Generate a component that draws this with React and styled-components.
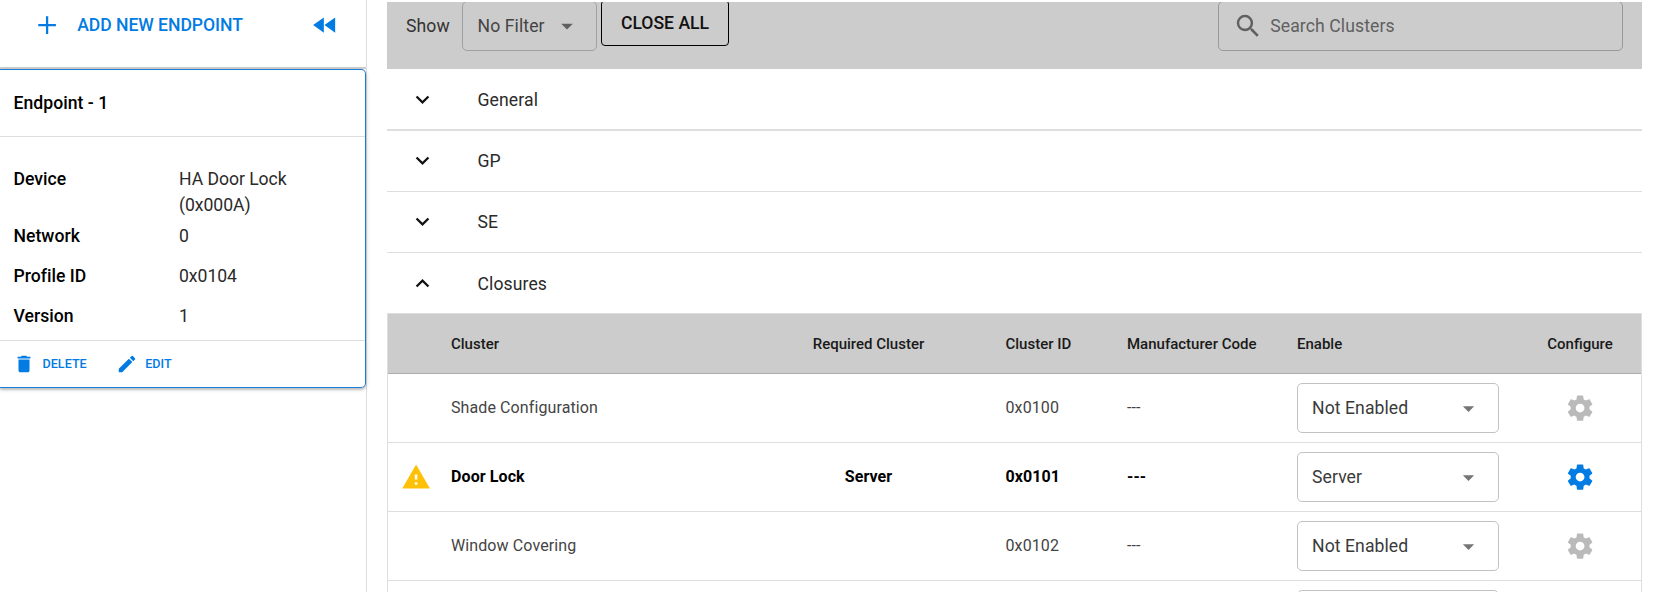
import React from "react";
import styled, { createGlobalStyle } from "styled-components";

const GlobalStyle = createGlobalStyle`
  *, *::before, *::after { box-sizing: border-box; }
  body {
    margin: 0;
    background: #fff;
    overflow: hidden;
    font-family: Roboto, "Liberation Sans", sans-serif;
    font-size: 17.6px;
    line-height: 26.4px;
    letter-spacing: 0.1px;
    color: #2a2a2a;
  }
`;

const icons = {
  add: "M19 12.9h-6.1V19h-1.8v-6.1H5v-1.8h6.1V5h1.8v6.1H19z",
  rewind: "M11 18V6l-8.5 6 8.5 6zm.5-6l8.5 6V6l-8.5 6z",
  trash: "M6 19c0 1.1.9 2 2 2h8c1.1 0 2-.9 2-2V7H6v12zM19 4h-3.5l-1-1h-5l-1 1H5v2h14V4z",
  pencil:
    "M3 17.25V21h3.75L17.81 9.94l-3.75-3.75L3 17.25zM20.71 7.04a1 1 0 0 0 0-1.41l-2.34-2.34a1 1 0 0 0-1.41 0l-1.83 1.83 3.75 3.75 1.83-1.83z",
  caret: "M7 10l5 5 5-5z",
  down: "M7.41 8.59L12 13.17l4.59-4.58L18 10l-6 6-6-6z",
  up: "M7.41 15.41L12 10.83l4.59 4.58L18 14l-6-6-6 6z",
  search:
    "M15.5 14h-.79l-.28-.27A6.471 6.471 0 0 0 16 9.5 6.5 6.5 0 1 0 9.5 16c1.61 0 3.09-.59 4.23-1.57l.27.28v.79l5 4.99L20.49 19l-4.99-5zm-6 0C7.01 14 5 11.99 5 9.5S7.01 5 9.5 5 14 7.01 14 9.5 11.99 14 9.5 14z",
  warning: "M1 21h22L12 2 1 21zm12-3h-2v-2h2v2zm0-4h-2v-4h2v4z",
  gear:
    "M19.43 12.98c.04-.32.07-.64.07-.98s-.03-.66-.07-.98l2.11-1.65c.19-.15.24-.42.12-.64l-2-3.46c-.12-.22-.39-.3-.61-.22l-2.49 1c-.52-.4-1.08-.73-1.69-.98l-.38-2.65C14.46 2.18 14.25 2 14 2h-4c-.25 0-.46.18-.49.42l-.38 2.65c-.61.25-1.17.59-1.69.98l-2.49-1c-.23-.09-.49 0-.61.22l-2 3.46c-.13.22-.07.49.12.64l2.11 1.65c-.04.32-.07.65-.07.98s.03.66.07.98l-2.11 1.65c-.19.15-.24.42-.12.64l2 3.46c.12.22.39.3.61.22l2.49-1c.52.4 1.08.73 1.69.98l.38 2.65c.03.24.24.42.49.42h4c.25 0 .46-.18.49-.42l.38-2.65c.61-.25 1.17-.59 1.69-.98l2.49 1c.23.09.49 0 .61-.22l2-3.46c.12-.22.07-.49-.12-.64l-2.11-1.65zM12 15.5c-1.93 0-3.5-1.57-3.5-3.5s1.57-3.5 3.5-3.5 3.5 1.57 3.5 3.5-1.57 3.5-3.5 3.5z",
};

const Svg = styled.svg`
  display: block;
  flex: none;
  width: ${(p) => p.$size}px;
  height: ${(p) => p.$size}px;
  fill: ${(p) => p.$color || "currentColor"};
`;

const Icon = ({ name, size, color }) => (
  <Svg viewBox="0 0 24 24" $size={size} $color={color} aria-hidden="true">
    <path d={icons[name]} />
  </Svg>
);

const Page = styled.div`
  display: flex;
  width: 1653px;
  height: 592px;
  overflow: hidden;
`;

const Sidebar = styled.aside`
  width: 367px;
  flex: none;
  border-right: 1px solid #dedede;
`;

const SidebarActions = styled.div`
  display: flex;
  align-items: center;
  justify-content: space-between;
  height: 67px;
  padding: 0 26px 17px 32px;
  color: #027be3;
`;

const PlainButton = styled.button`
  display: flex;
  align-items: center;
  padding: 0;
  border: 0;
  background: none;
  font: inherit;
  font-weight: 500;
  letter-spacing: -0.05px;
  color: inherit;
  gap: 15px;
`;

const CardFrame = styled.div`
  border-top: 2px solid #d3d3d3;
`;

const EndpointCard = styled.section`
  height: 319px;
  border: 1px solid #1a7dd7;
  border-left: 0;
  border-radius: 0 5px 5px 0;
  box-shadow: 0 1px 5px rgba(0, 0, 0, 0.2), 0 2px 2px rgba(0, 0, 0, 0.14);
`;

const CardTitle = styled.h2`
  display: flex;
  align-items: center;
  height: 67px;
  margin: 0;
  padding: 0 13.5px;
  border-bottom: 1px solid #dedede;
  font-size: 17.6px;
  font-weight: 500;
  letter-spacing: 0.03px;
  color: #000;
`;

const Details = styled.dl`
  display: grid;
  grid-template-columns: 165.5px 150px;
  grid-template-rows: 57px 40px 40px 40px;
  height: 204px;
  margin: 0;
  padding: 29px 0 0 13.5px;
  border-bottom: 1px solid #dedede;
`;

const Term = styled.dt`
  font-weight: 500;
  letter-spacing: 0.02px;
  color: #000;
`;

const Value = styled.dd`
  margin: 0;
  letter-spacing: -0.04px;
`;

const CardActions = styled.div`
  display: flex;
  align-items: center;
  height: 46px;
  padding-left: 13px;
  gap: 29px;
  color: #027be3;
`;

const SmallButton = styled(PlainButton)`
  font-size: 12.6px;
  letter-spacing: 0;
  gap: 7.5px;
`;

const Main = styled.main`
  width: 1255px;
  margin-left: 20px;
  padding-top: 2px;
`;

const Toolbar = styled.div`
  display: flex;
  align-items: flex-start;
  height: 67px;
  overflow: hidden;
  padding: 0 19px 0 19px;
  background: #ccc;
`;

const ToolbarLabel = styled.span`
  width: 56px;
  margin-top: 11px;
  color: #333;
`;

const Outlined = styled.div`
  display: flex;
  align-items: center;
  flex: none;
  width: ${(p) => p.$width}px;
  height: 50px;
  border: 1px solid ${(p) => p.$border || "#c2c2c2"};
  border-radius: 5px;
`;

const FilterSelect = styled(Outlined)`
  margin-top: -1px;
  padding-left: 14.5px;
  gap: 8px;
  color: #444;
  letter-spacing: 0.1px;
`;

const CloseAll = styled.button`
  width: 128px;
  height: 46px;
  margin: -2px 0 0 4px;
  padding: 0;
  border: 1px solid #000;
  border-radius: 4px;
  background: none;
  font: inherit;
  font-weight: 500;
  letter-spacing: 0;
  color: #111;
`;

const SearchBox = styled(Outlined)`
  margin: -1px 0 0 auto;
  padding-left: 13.5px;
  gap: 7.5px;
  color: #606060;
`;

const DomainRow = styled.div`
  display: flex;
  align-items: center;
  height: ${(p) => p.$height}px;
  padding-left: 22px;
  padding-top: ${(p) => p.$offset || 0}px;
  gap: 41.5px;
  border-bottom: ${(p) => p.$line}px solid #dedede;

  ${Svg} {
    margin-bottom: 1px;
  }
`;

const DomainName = styled.span`
  padding-top: 1px;
`;

const Table = styled.div`
  border: 1px solid #dedede;
  border-bottom: 0;
`;

const TableRow = styled.div`
  display: grid;
  grid-template-columns: 63px 281px 273px 122px 170px 1fr 122px;
  align-items: center;
  height: 69px;
  border-bottom: 1px solid #dedede;
  font-size: 16px;
  letter-spacing: 0.1px;
  font-weight: ${(p) => (p.$bold ? 700 : 400)};
  color: ${(p) => (p.$bold ? "#000" : "#444")};
`;

const HeadRow = styled(TableRow)`
  height: 60px;
  padding-top: 1px;
  background: #ccc;
  border-bottom-color: #adadad;
  font-size: 15px;
  letter-spacing: 0;
  font-weight: 500;
  color: #1a1a1a;
`;

const Cell = styled.div`
  display: flex;
  justify-content: ${(p) => (p.$center ? "center" : "flex-start")};
`;

const IdCell = styled(Cell)`
  padding-left: 0.5px;
`;

const StatusCell = styled.div`
  padding-left: 13px;
`;

const EnableSelect = styled(Outlined)`
  justify-content: space-between;
  padding: 0 16px 0 14px;
  font-size: 17.6px;
  font-weight: 400;
  letter-spacing: 0.08px;
  color: #3a3a3a;
`;

const details = [
  ["Device", "HA Door Lock (0x000A)"],
  ["Network", "0"],
  ["Profile ID", "0x0104"],
  ["Version", "1"],
];

const domains = [
  { name: "General", icon: "down", height: 62, line: 2, offset: 1 },
  { name: "GP", icon: "down", height: 61, line: 1 },
  { name: "SE", icon: "down", height: 61, line: 1 },
  { name: "Closures", icon: "up", height: 60, line: 0, offset: 2 },
];

const clusters = [
  { name: "Shade Configuration", id: "0x0100", code: "---", enable: "Not Enabled" },
  { name: "Door Lock", id: "0x0101", code: "---", enable: "Server", required: "Server", active: true },
  { name: "Window Covering", id: "0x0102", code: "---", enable: "Not Enabled" },
  { name: "", id: "", code: "", enable: "" },
];

export default function App() {
  return (
    <>
      <GlobalStyle />
      <Page>
        <Sidebar>
          <SidebarActions>
            <PlainButton>
              <Icon name="add" size={30.2} />
              ADD NEW ENDPOINT
            </PlainButton>
            <PlainButton aria-label="Collapse">
              <Icon name="rewind" size={30.2} />
            </PlainButton>
          </SidebarActions>
          <CardFrame>
            <EndpointCard>
              <CardTitle>Endpoint - 1</CardTitle>
              <Details>
                {details.map(([term, value]) => (
                  <React.Fragment key={term}>
                    <Term>{term}</Term>
                    <Value>{value}</Value>
                  </React.Fragment>
                ))}
              </Details>
              <CardActions>
                <SmallButton>
                  <Icon name="trash" size={22} />
                  DELETE
                </SmallButton>
                <SmallButton>
                  <Icon name="pencil" size={22} />
                  EDIT
                </SmallButton>
              </CardActions>
            </EndpointCard>
          </CardFrame>
        </Sidebar>
        <Main>
          <Toolbar>
            <ToolbarLabel>Show</ToolbarLabel>
            <FilterSelect $width={135} $border="#a0a0a0">
              No Filter
              <Icon name="caret" size={28} color="#606060" />
            </FilterSelect>
            <CloseAll>CLOSE ALL</CloseAll>
            <SearchBox $width={405} $border="#999">
              <Icon name="search" size={30.2} />
              Search Clusters
            </SearchBox>
          </Toolbar>
          {domains.map((d) => (
            <DomainRow key={d.name} $height={d.height} $line={d.line} $offset={d.offset}>
              <Icon name={d.icon} size={27} color="#111" />
              <DomainName>{d.name}</DomainName>
            </DomainRow>
          ))}
          <Table>
            <HeadRow>
              <Cell />
              <Cell>Cluster</Cell>
              <Cell $center>Required Cluster</Cell>
              <IdCell>Cluster ID</IdCell>
              <Cell>Manufacturer Code</Cell>
              <Cell>Enable</Cell>
              <Cell $center>Configure</Cell>
            </HeadRow>
            {clusters.map((c) => (
              <TableRow key={c.id} $bold={c.active}>
                <StatusCell>{c.active && <Icon name="warning" size={30.2} color="#ffc107" />}</StatusCell>
                <Cell>{c.name}</Cell>
                <Cell $center>{c.required}</Cell>
                <IdCell>{c.id}</IdCell>
                <Cell>{c.code}</Cell>
                <EnableSelect $width={202}>
                  {c.enable}
                  {c.enable && <Icon name="caret" size={27} color="#757575" />}
                </EnableSelect>
                <Cell $center>
                  {c.id && <Icon name="gear" size={30.2} color={c.active ? "#027be3" : "#bababa"} />}
                </Cell>
              </TableRow>
            ))}
          </Table>
        </Main>
      </Page>
    </>
  );
}
